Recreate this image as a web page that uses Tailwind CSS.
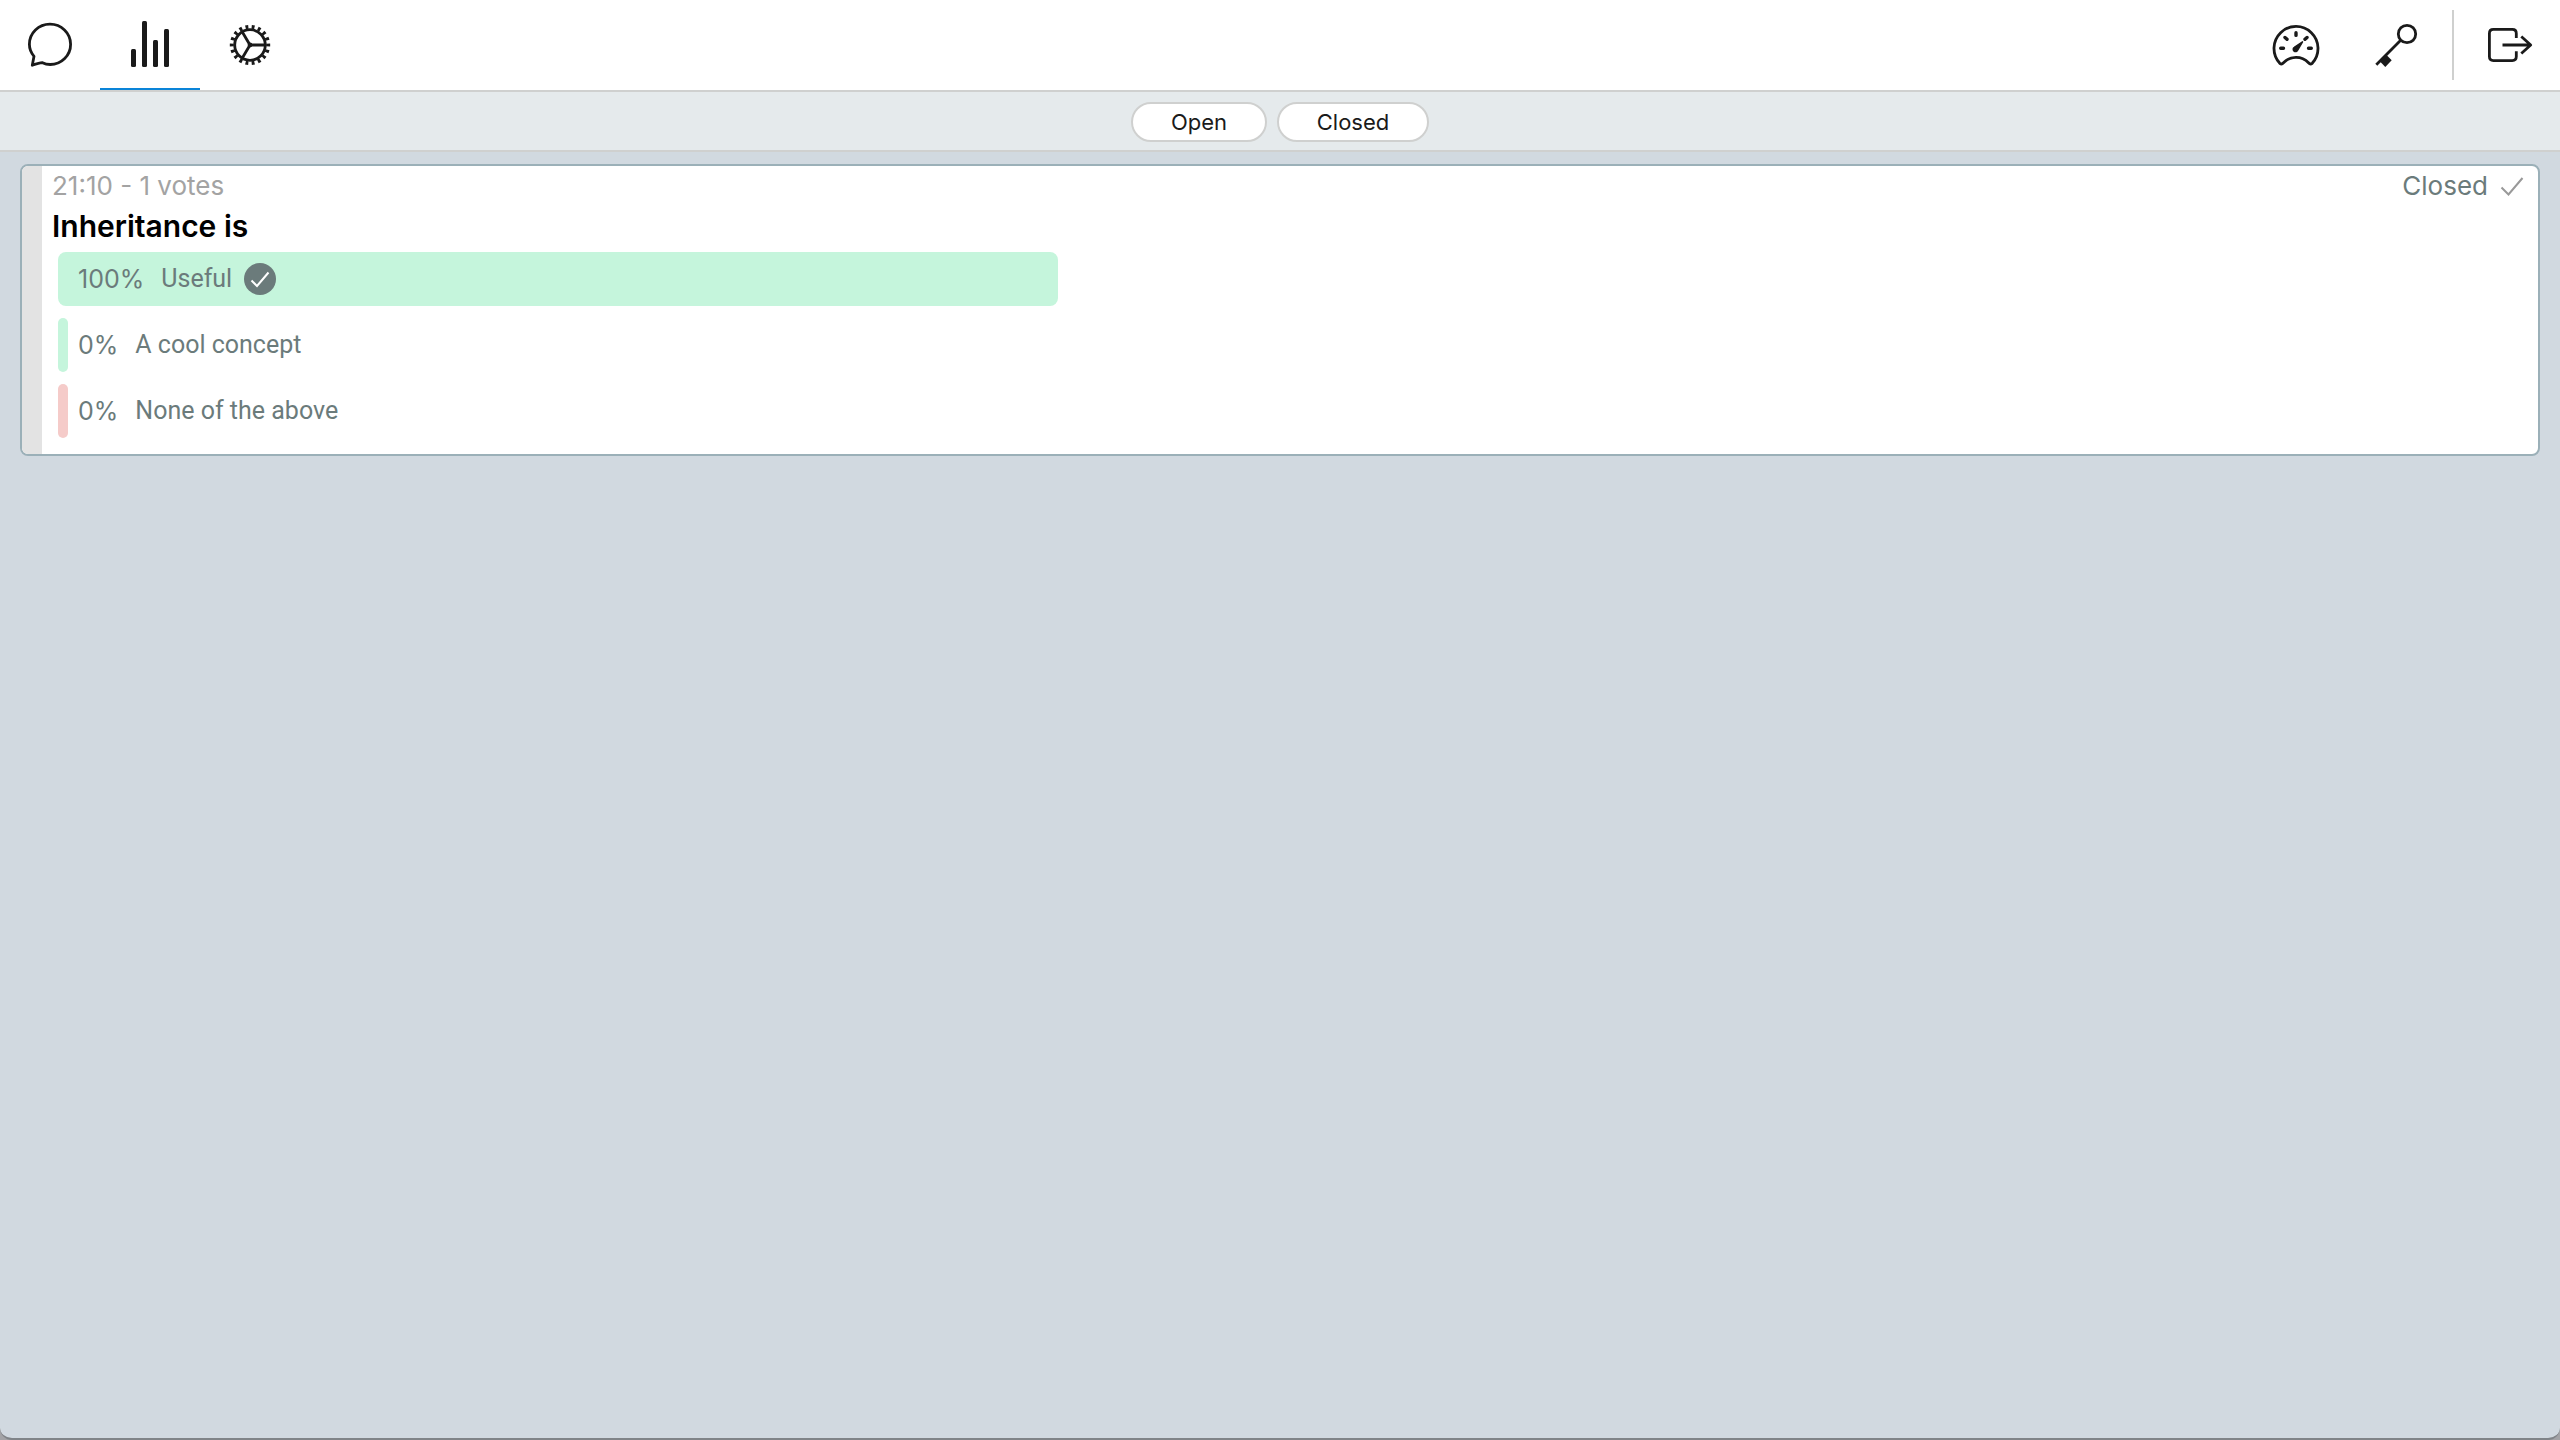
<!DOCTYPE html>
<html lang="en">
<head>
<meta charset="utf-8">
<meta name="viewport" content="width=device-width, initial-scale=1">
<title>Polls</title>
<script src="https://cdn.jsdelivr.net/npm/@tailwindcss/browser@4"></script>
</head>
<body class="bg-[#a3a3a6] font-['Inter',sans-serif]">
<div class="flex min-h-screen flex-col overflow-hidden rounded-b-xl border-b-2 border-[#808488] bg-[#d1d9e0]">

  <header class="flex justify-between border-b-2 border-[#cfd0cf] bg-white text-[#1a1a1a]">
    <nav class="flex" aria-label="Main">
      <a href="#chat" aria-label="Chat" class="flex h-[90px] w-[100px] items-center justify-center">
        <svg class="size-12" viewBox="0 0 48 48" fill="none" stroke="currentColor" stroke-width="2.8" stroke-linejoin="round"><path d="M6.3 44.3 8 35.3C5 31.8 3.4 27.8 3.4 23.3A20.6 20.2 0 1 1 24.2 43.5C21.5 43.5 19 43 16.500 41.700Q14 41.500 6.300 44.300Z"/></svg>
      </a>
      <a href="#polls" aria-label="Polls" aria-current="page" class="flex h-[90px] w-[100px] items-center justify-center border-b-2 border-[#0a84d8] pt-[2px]">
        <svg class="size-12" viewBox="0 0 48 48" fill="currentColor"><rect x="5" y="28" width="5" height="18" rx="1.500"/><rect x="16" y="0" width="5" height="46" rx="1.500"/><rect x="27" y="19" width="5" height="27" rx="1.500"/><rect x="38" y="8" width="5" height="38" rx="1.500"/></svg>
      </a>
      <a href="#settings" aria-label="Settings" class="flex h-[90px] w-[100px] items-center justify-center">
        <svg class="size-12" viewBox="0 0 48 48" fill="none" stroke="currentColor" stroke-width="2.8"><circle cx="24" cy="24" r="15.300"/><circle cx="24" cy="24" r="18.200" stroke-width="4" pathLength="360" stroke-dasharray="9 11" stroke-dashoffset="4.500"/><path d="M39 24H24L16.300 11M24 24 16.300 37"/><circle cx="24" cy="24" r="1" fill="currentColor"/></svg>
      </a>
    </nav>
    <div class="flex items-center">
      <button type="button" aria-label="Dashboard" class="flex h-[90px] w-[100px] items-center justify-center">
        <svg class="size-12" viewBox="0 0 48 48" fill="none" stroke="currentColor" stroke-width="2.8" stroke-linecap="round" stroke-linejoin="round"><path d="M7.800 42.300A22 22 0 1 1 40.200 42.300Q38.300 43.800 36.500 41.800Q31.500 36.400 24 36.400T11.500 41.800Q9.700 43.800 7.800 42.300Z"/><path stroke-width="3.400" d="M8.700 27.300h2.800M36.500 27.300h2.800M24 11.800v2.600M13 16.500l2 1.800M35 16.500l-2 1.800"/><path fill="currentColor" stroke-width="1.500" d="M30.500 20.800 22.300 26.300A2.300 2.300 0 1 0 25.700 29Z"/></svg>
      </button>
      <button type="button" aria-label="Access key" class="flex h-[90px] w-[100px] items-center justify-center">
        <svg class="size-12" viewBox="0 0 48 48" fill="none" stroke="currentColor" stroke-width="2.8"><circle cx="35" cy="13" r="8.700"/><path d="M28.700 19.300 4.300 43.700"/><path fill="currentColor" stroke="none" d="M14.300 33.700 19.700 39.300 13.300 46 8 40.500Z"/></svg>
      </button>
      <div class="mx-[6px] h-[70px] w-[2px] bg-[#cfd0cf]"></div>
      <button type="button" aria-label="Log out" class="flex h-[90px] w-[100px] items-center justify-center">
        <svg class="size-12" viewBox="0 0 48 48" fill="none" stroke="currentColor" stroke-width="2.8" stroke-linejoin="round"><path d="M30.300 17V12.400Q30.300 8.400 26.300 8.400H7.400Q3.400 8.400 3.400 12.400V35.600Q3.400 39.600 7.400 39.600H26.300Q30.300 39.600 30.300 35.600V30.300"/><path d="M16.500 24H45M35.300 15.500 44.700 24 35.300 32.500"/></svg>
      </button>
    </div>
  </header>

  <div class="flex h-[60px] items-center justify-center gap-[10px] border-b-2 border-[#cfd0cf] bg-[#e5eaec] pt-[2px]">
    <button type="button" class="h-10 w-[136px] rounded-full border-2 border-[#cfd0cf] bg-white text-[22px] leading-6 text-[#1a1a1a]">Open</button>
    <button type="button" class="h-10 w-[152px] rounded-full border-2 border-[#cfd0cf] bg-white text-[22px] leading-6 text-[#1a1a1a]">Closed</button>
  </div>

  <main class="grow px-5 pt-3">
    <article class="overflow-hidden rounded-lg border-2 border-[#9bb0b8] bg-white">
      <div class="border-l-20 border-[#e3e3e3] pr-[14px] pb-4 pl-[10px]">
        <div class="flex justify-between text-[26px] leading-10">
          <p class="text-[#a3a3a3]">21:10 - 1 votes</p>
          <p class="flex items-center gap-3 text-[#6b7b7b]">Closed
            <svg class="size-6" viewBox="0 0 24 24" fill="none" stroke="#999" stroke-width="2" aria-hidden="true"><path d="M1.500 13.500 8.500 20.500 22.500 4"/></svg>
          </p>
        </div>
        <h2 class="text-[30px] leading-10 font-semibold text-black">Inheritance is</h2>
        <ul class="mt-[6px] ml-[6px] flex max-w-[1000px] flex-col gap-3 font-['Roboto',sans-serif] text-[25px] leading-8 text-[#6b7b7b]">
          <li class="grid h-[54px] items-center">
            <div class="col-start-1 row-start-1 h-full min-w-[10px] rounded-lg bg-[#c5f5dc]" style="width:100%"></div>
            <div class="col-start-1 row-start-1 flex items-center gap-[17px] pl-5"><span class="font-['Inter',sans-serif]">100%</span>
              <span class="flex items-center gap-3">Useful
                <svg class="size-8" viewBox="0 0 32 32" role="img" aria-label="Your vote"><circle cx="16" cy="16" r="16" fill="#6b7b7b"/><path d="M7.500 17.500 13 23 24.500 9.500" fill="none" stroke="#fff" stroke-width="2"/></svg>
              </span>
            </div>
          </li>
          <li class="grid h-[54px] items-center">
            <div class="col-start-1 row-start-1 h-full min-w-[10px] rounded-lg bg-[#c5f5dc]" style="width:0%"></div>
            <div class="col-start-1 row-start-1 flex items-center gap-[17px] pl-5"><span class="font-['Inter',sans-serif]">0%</span><span>A cool concept</span></div>
          </li>
          <li class="grid h-[54px] items-center">
            <div class="col-start-1 row-start-1 h-full min-w-[10px] rounded-lg bg-[#f5cbc9]" style="width:0%"></div>
            <div class="col-start-1 row-start-1 flex items-center gap-[17px] pl-5"><span class="font-['Inter',sans-serif]">0%</span><span>None of the above</span></div>
          </li>
        </ul>
      </div>
    </article>
  </main>
</div>
</body>
</html>
